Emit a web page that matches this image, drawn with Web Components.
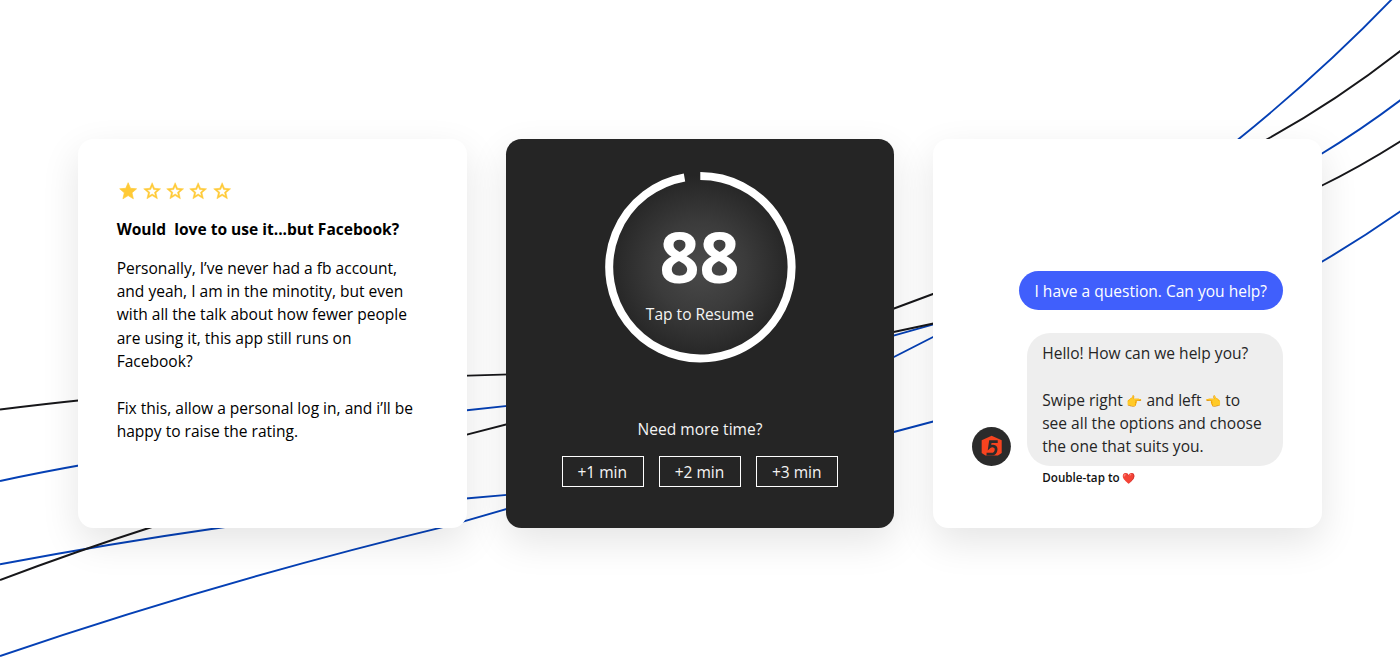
<!DOCTYPE html>
<html lang="en">
<head>
<meta charset="utf-8">
<title>Reviews, timer and chat</title>
<style>
html,body{margin:0;height:100%;overflow:hidden;background:#fff}
body{font:400 15.556px/23.333px "Open Sans","Noto Sans",sans-serif;color:#000}
</style>
</head>
<body>
<card-board>
  <ui-card>
    <star-rating value="1"></star-rating>
    <review-text heading="Would&nbsp; love to use it...but Facebook?">Personally, I’ve never had a fb account,<br>and yeah, I am in the minotity, but even<br>with all the talk about how fewer people<br>are using it, this app still runs on<br>Facebook?<br><br>Fix this, allow a personal log in, and i’ll be<br>happy to raise the rating.</review-text>
  </ui-card>
  <ui-card dark>
    <timer-ring value="88">Tap to Resume</timer-ring>
    <time-options heading="Need more time?"><time-button>+1 min</time-button><time-button>+2 min</time-button><time-button>+3 min</time-button></time-options>
  </ui-card>
  <ui-card>
    <chat-thread>
      <chat-bubble mine>I have a question. Can you help?</chat-bubble>
      <chat-avatar slot="avatar"></chat-avatar>
      <chat-bubble slot="reply">Hello! How can we help you?<br><br>Swipe right <emoji-glyph>👉</emoji-glyph> and left <emoji-glyph>👈</emoji-glyph> to<br>see all the options and choose<br>the one that suits you.</chat-bubble>
      <span slot="hint">Double-tap to <emoji-glyph small>❤️</emoji-glyph></span>
    </chat-thread>
  </ui-card>
</card-board>
<script>
const define = (name, html, setup) => customElements.define(name, class extends HTMLElement {
  connectedCallback() {
    if (this.shadowRoot) return;
    const t = document.createElement('template');
    t.innerHTML = html;
    this.attachShadow({mode: 'open'}).append(t.content.cloneNode(true));
    if (setup) setup(this, this.shadowRoot);
  }
});

define('card-board', `<style>
:host{display:grid;height:666px;place-items:center;position:relative;overflow:hidden}
svg{position:absolute;inset:0;width:1400px;height:666px}
.row{display:flex;gap:38.9px;position:relative;top:.4px}
</style>
<svg viewBox="0 0 1400 666" fill="none" stroke-width="1.9">
<g stroke="#0540b5">
<path d="M0 481Q39 472.5 90 463.5M460 411L510 405.6"/>
<path d="M0 564.3Q110 543.5 225 527"/>
<path d="M0 656Q220 581 450 525.4L510 508"/>
<path d="M460 499L510 494.6M890 336.6L937 323.3M890 359L937 335M890 433L937 420.5"/>
<path d="M1235 142Q1322 72 1393 -2"/>
<path d="M1318 156Q1361 130 1402 99M1318 264Q1361 239 1402 210.3"/>
</g>
<g stroke="#17171a">
<path d="M0 409.5Q39 404.5 90 399.2M460 375.9L510 374.4"/>
<path d="M0 580Q77 551 155 526M460 436.3L510 423.5"/>
<path d="M890 310L937 292.5M890 332.8L937 322.8"/>
<path d="M1262 142Q1334 103 1402 49.7M1318 187.5Q1360 167 1402 140.3"/>
</g>
</svg>
<div class="row"><slot></slot></div>`);

define('ui-card', `<style>
:host{display:flex;flex-direction:column;box-sizing:border-box;width:388.9px;height:388.9px;padding:38.9px;border-radius:15.56px;background:#fff;box-shadow:0 14px 38px rgba(0,0,0,.105)}
:host([dark]){background:#252525;color:#f4f4f4;align-items:center;padding-top:32.7px}
</style><slot></slot>`);

define('star-rating', `<style>
:host{display:flex;height:23.33px;margin-bottom:15.56px}
span{display:grid;place-items:center;width:23.4px;height:23.33px;padding-top:3px;box-sizing:border-box}
svg{width:20.3px;height:20.3px;fill:#ffca36}
</style>`, (el, root) => {
  for (let i = 0; i < 5; i++) {
    const s = document.createElement('span');
    s.innerHTML = i < +el.getAttribute('value')
      ? '<svg viewBox="0 0 24 24"><path stroke="#ffca36" stroke-width=".8" stroke-linejoin="round" d="M12 17.27 18.18 21l-1.64-7.03L22 9.24l-7.19-.61L12 2 9.19 8.63 2 9.24l5.46 4.73L5.82 21z"/></svg>'
      : '<svg viewBox="0 0 24 24"><path stroke="#ffca36" stroke-width=".6" stroke-linejoin="round" d="m22 9.24-7.19-.62L12 2 9.19 8.63 2 9.24l5.46 4.73L5.82 21 12 17.27 18.18 21l-1.63-7.03L22 9.24zM12 15.4l-3.76 2.27 1-4.28-3.32-2.88 4.38-.38L12 6.1l1.71 4.04 4.38.38-3.32 2.88 1 4.28L12 15.4z"/></svg>';
    root.append(s);
  }
});

define('review-text', `<style>
:host{display:block;white-space:nowrap;padding-top:1px}
h2{font:inherit;font-weight:700;margin:0 0 15.56px}
p{margin:0}
</style><h2></h2><p><slot></slot></p>`, (el, root) => {
  root.querySelector('h2').textContent = el.getAttribute('heading');
});

define('timer-ring', `<style>
:host{display:grid;width:190px;height:190.6px}
svg,.label{grid-area:1/1}
svg{width:190.6px;height:190.6px;overflow:visible}
.label{display:flex;flex-direction:column;align-items:center;padding-top:49.8px}
b{font-size:70px;line-height:70px;font-weight:700;color:#fff;margin:0 1.5px 11.6px 0}
span{margin-right:.8px}
</style>
<svg viewBox="0 0 190.6 190.6">
<defs><radialGradient id="g"><stop offset="0" stop-color="#4a4a4a"/><stop offset=".5" stop-color="#3b3b3b"/><stop offset="1" stop-color="#252525"/></radialGradient></defs>
<circle cx="95.3" cy="95.3" r="92" fill="url(#g)"/>
<path d="M95.3 4.1A91.2 91.2 0 1 1 79.5 5.5" fill="none" stroke="#fff" stroke-width="8"/>
</svg>
<div class="label"><b></b><span><slot></slot></span></div>`, (el, root) => {
  root.querySelector('b').textContent = el.getAttribute('value');
});

define('time-options', `<style>
:host{display:flex;flex-direction:column;align-items:center;gap:15.2px;margin-top:auto;margin-bottom:1.8px}
div{display:flex;gap:15.56px}
</style><span></span><div><slot></slot></div>`, (el, root) => {
  root.querySelector('span').textContent = el.getAttribute('heading');
});

define('time-button', `<style>
:host{display:block;box-sizing:border-box;width:81.7px;height:31.1px;border:1px solid #fff;text-align:center;line-height:30px;padding-right:1px}
</style><slot></slot>`);

define('chat-thread', `<style>
:host{display:flex;flex-direction:column;align-items:flex-end;flex:1;justify-content:flex-end;color:#252525}
.reply{display:flex;align-items:flex-end;justify-content:space-between;align-self:stretch;margin-top:23.33px}
.hint{align-self:stretch;padding-left:70px;font-size:11.67px;font-weight:600;height:23.33px;color:#111}
</style><slot></slot><div class="reply"><slot name="avatar"></slot><slot name="reply"></slot></div><div class="hint"><slot name="hint"></slot></div>`);

define('chat-bubble', `<style>
:host{display:block;box-sizing:border-box;width:256.7px;padding:8.7px 15.56px 6.86px;border-radius:23.33px;background:#eee;white-space:nowrap}
:host([mine]){width:264.4px;border-radius:19.45px;background:#405ffc;color:#fff}
</style><slot></slot>`);

define('chat-avatar', `<style>
:host{display:block;width:38.9px;height:38.9px}
svg{display:block;width:100%;height:100%}
</style>
<svg viewBox="0 0 39 39"><circle cx="19.5" cy="19.5" r="19.5" fill="#2b2b2b"/>
<path d="M19.7 8.8 29.8 13.4V26L26 28.6H13.5L9.7 26V13.4Z" fill="#f6431f"/>
<path d="M25.8 14.6H18.4L17.6 20.1Q19 18.9 21.2 19.1 24.4 19.4 24.2 22.6 23.8 27.2 19.6 27.2H14.6" fill="none" stroke="#2b2b2b" stroke-width="2.7"/></svg>`);

define('emoji-glyph', `<style>
:host{display:inline-block;width:15.6px;font:13px/1 "Noto Color Emoji","Apple Color Emoji",sans-serif;text-align:center}
:host([small]){width:12px;font-size:10.5px}
</style><slot></slot>`);
</script>
</body>
</html>
